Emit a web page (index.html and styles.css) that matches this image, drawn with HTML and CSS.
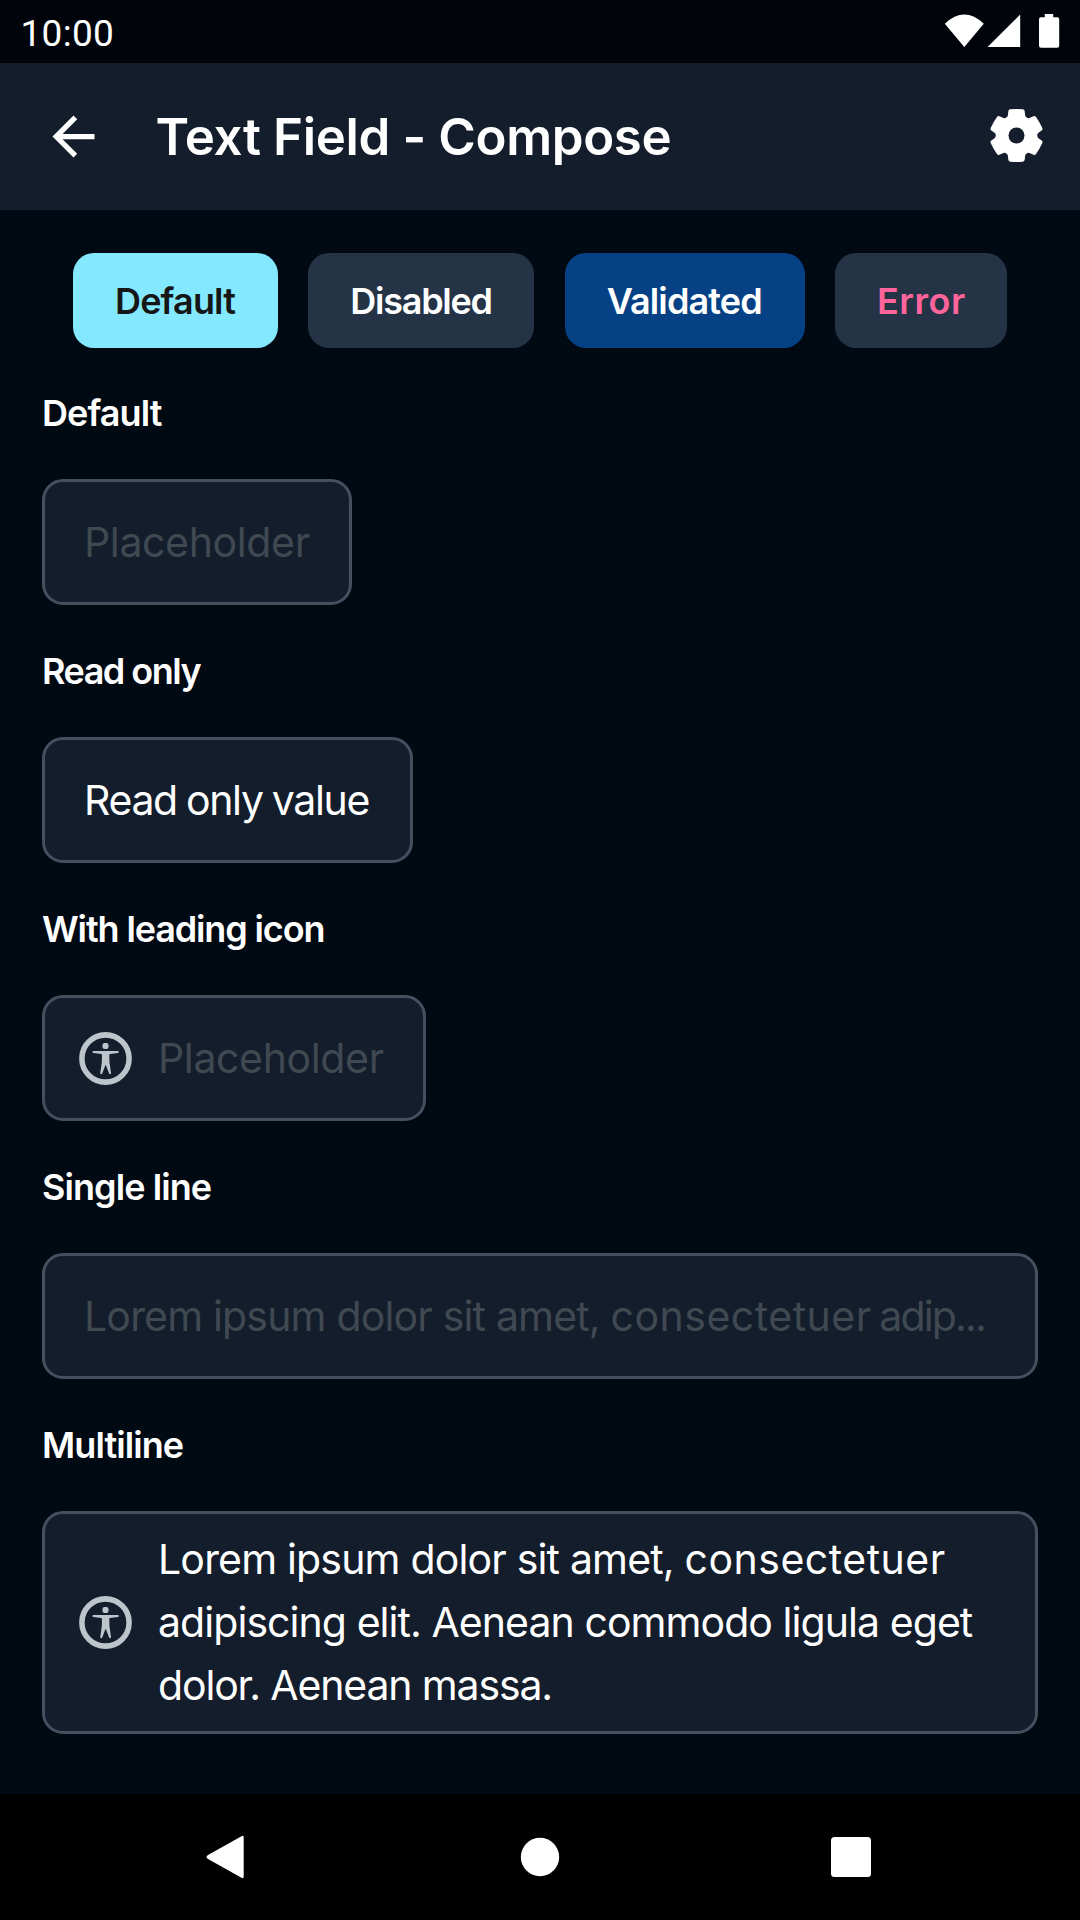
FILE: index.html
```html
<!DOCTYPE html>
<html lang="en">
<head>
<meta charset="utf-8">
<title>Text Field - Compose</title>
<link rel="stylesheet" href="styles.css">
</head>
<body>
<svg class="defs" aria-hidden="true">
  <symbol id="accessibility" viewBox="0 0 24 24">
    <circle cx="12" cy="12" r="9" fill="none" stroke="currentColor" stroke-width="2.1"/>
    <rect x="10.85" y="6.1" width="2.3" height="2.3" rx=".8" fill="currentColor"/>
    <path fill="currentColor" d="M7.450 9.100h9.200c.55 0 .55.75.05.85l-2.950.35c-.2.03-.3.15-.3.4l.05 2.600.6 4.200c.05.6-.65.65-.75.15L12.150 14.600h-.2l-1.150 3.050c-.15.5-.85.4-.8-.15l.6-4.200.05-2.600c0-.25-.1-.37-.3-.4L7.400 9.950c-.5-.1-.5-.85.05-.85z"/>
  </symbol>
</svg>
<div class="screen">
  <header class="status">
    <span class="clock">10:00</span>
    <svg class="signals" viewBox="0 0 116 36" aria-hidden="true">
      <path d="M.8 9.800Q20.300-8.600 39.800 9.800L20.300 33z"/>
      <path d="M43.500 33H76.200V.5z"/>
      <path d="M100.800 0h8.400v3.200h4q2 0 2 2V31.800q0 2-2 2H97q-2 0-2-2V5.200q0-2 2-2h3.800z"/>
    </svg>
  </header>
  <nav class="appbar">
    <svg class="icon" viewBox="0 0 24 24" aria-label="Back"><path fill="currentColor" d="M20 11H7.830l5.590-5.590L12 4l-8 8 8 8 1.410-1.410L7.830 13H20v-2z"/></svg>
    <h1 class="title">Text Field - Compose</h1>
    <svg class="icon settings" viewBox="-94.5 -94.5 189 189" aria-label="Settings">
      <defs><path id="tooth" d="M0 0L-34-52Q-27-54-26-60L-24.500-73Q-24-78-19-78.500Q0-80.500 19-78.500Q24-78 24.500-73L26-60Q27-54 34-52z"/></defs>
      <g fill="currentColor">
        <circle r="58"/>
        <use href="#tooth"/><use href="#tooth" transform="rotate(60)"/><use href="#tooth" transform="rotate(120)"/>
        <use href="#tooth" transform="rotate(180)"/><use href="#tooth" transform="rotate(240)"/><use href="#tooth" transform="rotate(300)"/>
      </g>
      <circle class="hub" r="24"/>
    </svg>
  </nav>
  <main class="content">
    <div class="chips">
      <button class="chip chip-default">Default</button>
      <button class="chip chip-disabled">Disabled</button>
      <button class="chip chip-validated">Validated</button>
      <button class="chip chip-error">Error</button>
    </div>
    <h2 class="label">Default</h2>
    <div class="field field-default"><span class="placeholder">Placeholder</span></div>
    <h2 class="label label-readonly">Read only</h2>
    <div class="field field-readonly"><span class="value-readonly">Read only value</span></div>
    <h2 class="label label-leading">With leading icon</h2>
    <div class="field field-leading has-icon"><svg class="icon"><use href="#accessibility"/></svg><span class="placeholder">Placeholder</span></div>
    <h2 class="label">Single line</h2>
    <div class="field field-wide"><span class="placeholder placeholder-long">Lorem ipsum dolor sit amet, <span class="loose">consectetuer</span><span class="tail"> adip...</span></span></div>
    <h2 class="label">Multiline</h2>
    <div class="field field-wide field-multi has-icon">
      <svg class="icon"><use href="#accessibility"/></svg>
      <p class="paragraph"><span class="line-1">Lorem ipsum dolor sit amet, <span class="loose">consectetuer</span></span><br><span class="line-2">adipiscing elit. Aenean commodo ligula eget</span><br><span class="line-3">dolor. Aenean massa.</span></p>
    </div>
  </main>
  <footer class="navbar">
    <svg viewBox="0 0 1080 126" aria-hidden="true">
      <path d="M241.500 42.200q2.200-1.200 2.200 1.500V82.300q0 2.700-2.200 1.500L208 65q-3-2 0-4z"/>
      <circle cx="540" cy="63" r="19.200"/>
      <rect x="831" y="43" width="40" height="40" rx="3.500"/>
    </svg>
  </footer>
</div>
</body>
</html>
```
FILE: styles.css
```css
* { box-sizing: border-box; }

body {
  margin: 0;
  background: #010913;
  color: #fff;
  font-family: Inter, "Liberation Sans", sans-serif;
}

h1, h2, p { margin: 0; }

.defs { display: none; }

.screen {
  display: flex;
  flex-direction: column;
  width: 1080px;
  height: 1920px;
}

.status {
  display: flex;
  justify-content: space-between;
  height: 63px;
  padding: 0 20px 0 20.5px;
  background: #01040b;
}

.clock {
  font: 400 37px/68px Roboto, sans-serif;
  letter-spacing: .29px;
}

.signals {
  width: 116px;
  height: 36px;
  margin-top: 14px;
  fill: #fff;
}

.appbar {
  display: flex;
  align-items: center;
  height: 147px;
  padding: 0 32px 0 42px;
  background: #131d2b;
}

.icon {
  flex: none;
  width: 63px;
  height: 63px;
}

.title {
  flex: 1;
  margin-left: 50.5px;
  font-size: 51px;
  font-weight: 600;
  line-height: 63px;
  letter-spacing: -.37px;
}

.settings { margin-bottom: 2px; }

.hub { fill: #131d2b; }

.content {
  display: flex;
  flex: 1;
  flex-direction: column;
  align-items: flex-start;
  padding: 43px 42px 0;
}

.chips {
  display: flex;
  align-self: stretch;
  justify-content: space-between;
  margin: 0 31px -1px;
}

.chip {
  height: 95px;
  padding: 1px 0 0 42px;
  border: 0;
  border-radius: 21px;
  background: #243346;
  color: #fff;
  font: 600 36px/52px Inter, sans-serif;
  text-align: left;
  white-space: nowrap;
}

.chip-default { width: 205px; background: #84e9ff; color: #161616; letter-spacing: -.85px; }
.chip-disabled { width: 226px; letter-spacing: -1.26px; }
.chip-validated { width: 240px; background: #054184; letter-spacing: -.85px; }
.chip-error { width: 172px; color: #ff649c; letter-spacing: .54px; }

.label {
  margin: 40px 0;
  font-size: 36px;
  font-weight: 600;
  line-height: 52px;
  letter-spacing: -.93px;
}

.label-readonly { letter-spacing: -1.5px; }
.label-leading { letter-spacing: -1.13px; }

.field {
  display: flex;
  align-items: center;
  height: 126px;
  padding-left: 39px;
  border: 3px solid #44505f;
  border-radius: 21px;
  background: #131d2b;
  font-size: 41px;
  line-height: 63px;
  white-space: nowrap;
}

.field-default { width: 310px; }
.field-readonly { width: 371px; }
.field-leading { width: 384px; }
.field-wide { width: 996px; }
.field-multi { height: 223px; }

.has-icon {
  gap: 21px;
  padding-left: 29px;
}

.has-icon .icon { color: #bdc4cb; }

.placeholder { color: #404952; letter-spacing: -.36px; }
.value-readonly { letter-spacing: -1.35px; word-spacing: -1px; }
.placeholder-long, .line-1 { letter-spacing: -.82px; }
.line-2 { letter-spacing: -.94px; }
.line-3 { letter-spacing: -1.15px; }
.loose { letter-spacing: .5px; }
.tail { letter-spacing: -1.85px; word-spacing: -2px; }

.navbar {
  height: 126px;
  background: #000;
}

.navbar svg {
  display: block;
  width: 1080px;
  height: 126px;
  fill: #fff;
}
```
